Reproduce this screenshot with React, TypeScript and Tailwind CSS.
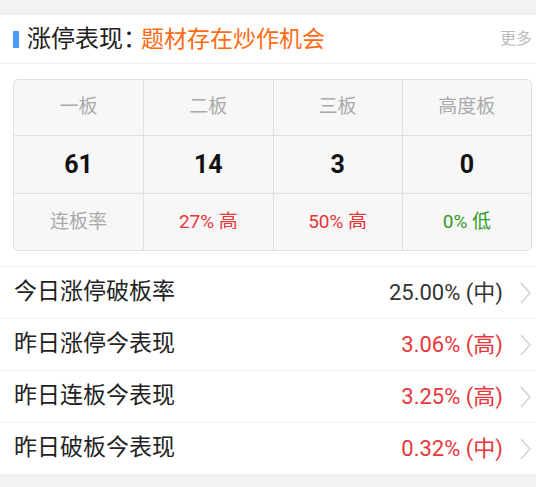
const FONT = "font-['Roboto','Noto_Sans_CJK_SC',sans-serif]";

type Cell = { text: string; tone: 'gray' | 'red' | 'green' };

const heads = ['一板', '二板', '三板', '高度板'];
const counts = ['61', '14', '3', '0'];
const rates: Cell[] = [
  { text: '连板率', tone: 'gray' },
  { text: '27% 高', tone: 'red' },
  { text: '50% 高', tone: 'red' },
  { text: '0% 低', tone: 'green' },
];

const rows = [
  { label: '今日涨停破板率', value: '25.00% (中)', red: false },
  { label: '昨日涨停今表现', value: '3.06% (高)', red: true },
  { label: '昨日连板今表现', value: '3.25% (高)', red: true },
  { label: '昨日破板今表现', value: '0.32% (中)', red: true },
];

const toneClass = {
  gray: 'text-[#aaaaaa]',
  red: 'text-[#e8363a]',
  green: 'text-[#2f9d22]',
};

const Chevron = () => (
  <svg width="11" height="22" viewBox="0 0 11 22" fill="none">
    <polyline points="1,1 10,11 1,21" stroke="#cfcfcf" strokeWidth="1.3" />
  </svg>
);

export default function App() {
  return (
    <div className={`${FONT} h-[487px] w-[536px] overflow-hidden bg-[#f2f2f2] pt-[15px]`}>
      <div className="bg-white">
        {/* header */}
        <div className="flex h-[49px] items-center border-b border-[#eeeeee] pl-[13px] pr-[4px]">
          <span className="h-[17px] w-[6px] bg-[#4a9bff]" />
          <span className="ml-[8px] text-[24px] leading-none text-[#222222]">涨停表现：</span>
          <span className="-ml-[6px] text-[23px] leading-none text-[#ff6a13]">题材存在炒作机会</span>
          <span className="ml-auto text-[16px] leading-none text-[#bbbbbb]">更多</span>
        </div>

        {/* board table */}
        <div className="pb-[15px] pl-[13px] pr-[4px] pt-[15px]">
          <div className="grid grid-cols-4 overflow-hidden rounded-[5px] border border-[#dddee8] bg-[#f7f7f7]">
            {heads.map((h, i) => (
              <div
                key={h}
                className={`flex h-[56px] items-center justify-center border-b border-[#dddee8] text-[19px] text-[#aaaaaa] ${i > 0 ? 'border-l' : ''}`}
              >
                {h}
              </div>
            ))}
            {counts.map((c, i) => (
              <div
                key={i}
                className={`flex h-[58px] items-center justify-center border-b border-[#dddee8] text-[25px] font-bold text-[#111111] ${i > 0 ? 'border-l' : ''}`}
              >
                {c}
              </div>
            ))}
            {rates.map((r, i) => (
              <div
                key={i}
                className={`flex h-[56px] items-center justify-center border-[#dddee8] text-[19px] ${toneClass[r.tone]} ${i > 0 ? 'border-l' : ''}`}
              >
                {r.text}
              </div>
            ))}
          </div>
        </div>

        {/* list */}
        {rows.map((r) => (
          <div
            key={r.label}
            className="flex h-[52px] items-center border-t border-[#eeeeee] pl-[14px] pr-[5px]"
          >
            <span className="text-[23px] text-[#222222]">{r.label}</span>
            <span className={`ml-auto text-[22px] ${r.red ? 'text-[#e8363a]' : 'text-[#333333]'}`}>
              {r.value}
            </span>
            <span className="ml-[17px] flex items-center">
              <Chevron />
            </span>
          </div>
        ))}
      </div>
    </div>
  );
}
